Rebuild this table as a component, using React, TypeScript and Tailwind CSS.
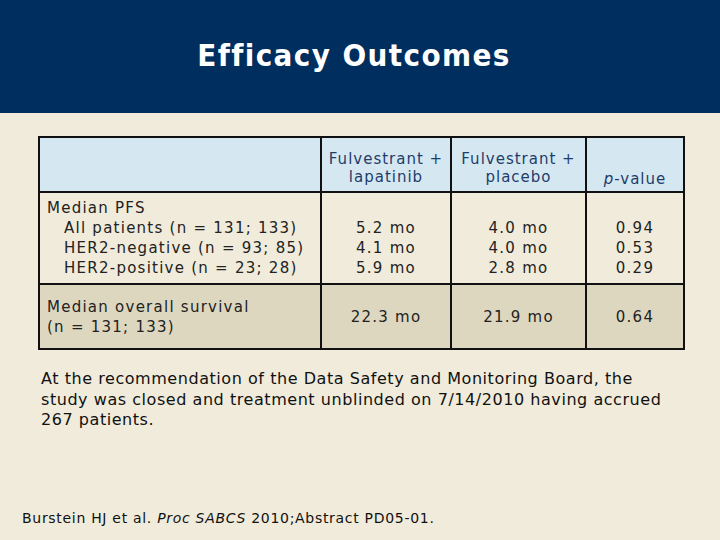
export default function App() {
  const font = { fontFamily: '"DejaVu Sans", Verdana, sans-serif' }
  const tahoma = { fontFamily: 'Tahoma, "DejaVu Sans", sans-serif' }

  return (
    <div className="w-[720px] h-[540px] bg-[#f0ebdb] flex flex-col overflow-hidden" style={font}>
      <header className="h-[113px] bg-[#002e5e] flex items-center justify-center">
        <h1
          className="text-white text-[31px] font-bold tracking-[1.4px] pr-[12px] pb-[2px]"
          style={{ fontFamily: 'Tahoma, "DejaVu Sans Condensed", "DejaVu Sans", sans-serif' }}
        >
          Efficacy Outcomes
        </h1>
      </header>

      <div className="pl-[38px] pt-[23px]">
        <table className="border-collapse border-2 border-[#111] text-[15px] tracking-[1px] text-[#222] leading-[20px]">
          <thead>
            <tr className="bg-[#d5e8f1] text-[#1f3d6b] h-[55px] leading-[18px]">
              <th className="w-[282px] border-2 border-[#111]"></th>
              <th className="w-[130px] border-2 border-[#111] font-normal align-bottom pb-[5px]">
                Fulvestrant +<br />lapatinib
              </th>
              <th className="w-[135px] border-2 border-[#111] font-normal align-bottom pb-[5px]">
                Fulvestrant +<br />placebo
              </th>
              <th className="w-[98px] border-2 border-[#111] font-normal align-bottom pb-[3px]">
                <i>p</i>-value
              </th>
            </tr>
          </thead>
          <tbody className="tracking-[1.25px]">
            <tr className="h-[92px]">
              <td className="border-2 border-[#111] pl-[7px] align-top pt-[5px]">
                <div>Median PFS</div>
                <div className="pl-[17px]">All patients (n = 131; 133)</div>
                <div className="pl-[17px]">HER2-negative (n = 93; 85)</div>
                <div className="pl-[17px]">HER2-positive (n = 23; 28)</div>
              </td>
              <td className="border-2 border-[#111] text-center align-top pt-[25px]">
                <div>5.2 mo</div>
                <div>4.1 mo</div>
                <div>5.9 mo</div>
              </td>
              <td className="border-2 border-[#111] text-center align-top pt-[25px]">
                <div>4.0 mo</div>
                <div>4.0 mo</div>
                <div>2.8 mo</div>
              </td>
              <td className="border-2 border-[#111] text-center align-top pt-[25px]">
                <div>0.94</div>
                <div>0.53</div>
                <div>0.29</div>
              </td>
            </tr>
            <tr className="h-[65px] bg-[#ddd7bf]">
              <td className="border-2 border-[#111] pl-[7px]">
                Median overall survival
                <br />
                (n = 131; 133)
              </td>
              <td className="border-2 border-[#111] text-center">22.3 mo</td>
              <td className="border-2 border-[#111] text-center">21.9 mo</td>
              <td className="border-2 border-[#111] text-center">0.64</td>
            </tr>
          </tbody>
        </table>
      </div>

      <p
        className="ml-[41px] w-[632px] pt-[19px] text-[16px] tracking-[0.55px] leading-[20.5px] text-[#111]"
        style={tahoma}
      >
        At the recommendation of the Data Safety and Monitoring Board, the study was closed and
        treatment unblinded on 7/14/2010 having accrued 267 patients.
      </p>

      <p className="mt-auto mb-[11px] pl-[22px] text-[14px] tracking-[0.7px] text-[#111]" style={tahoma}>
        Burstein HJ et al. <i>Proc SABCS</i> 2010;Abstract PD05-01.
      </p>
    </div>
  )
}
